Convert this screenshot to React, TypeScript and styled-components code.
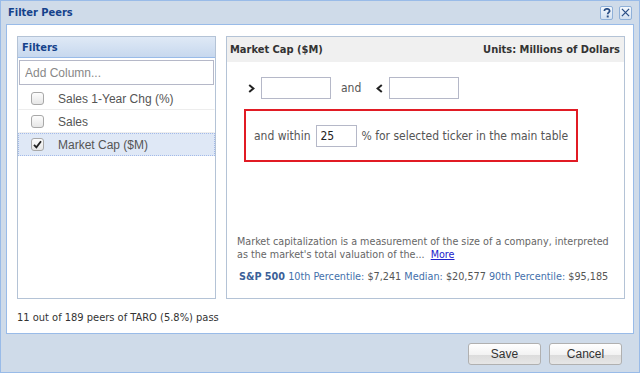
import React from "react";
import styled, { createGlobalStyle } from "styled-components";

const Global = createGlobalStyle`
  html, body { margin: 0; padding: 0; }
  body {
    width: 640px;
    height: 373px;
    overflow: hidden;
    font-family: "DejaVu Sans Condensed", "DejaVu Sans", sans-serif;
  }
`;

const filters = [
  { label: "Sales 1-Year Chg (%)", checked: false },
  { label: "Sales", checked: false },
  { label: "Market Cap ($M)", checked: true },
];

const App: React.FC = () => {
  return (
    <>
      <Global />
      <Window>
        <TitleBar>
          <Title>Filter Peers</Title>
          <Tools>
            <ToolButton>
              <svg width="8" height="10" viewBox="0 0 9 11">
                <path d="M1.5 3.2 C1.5 1.5 3 0.8 4.5 0.8 C6.3 0.8 7.5 1.8 7.5 3.2 C7.5 4.8 5.3 5 5.3 6.8" fill="none" stroke="#2a4e85" strokeWidth="2" />
                <rect x="4.2" y="8.3" width="2.2" height="2.2" fill="#2a4e85" />
              </svg>
            </ToolButton>
            <ToolButton>
              <svg width="9" height="9" viewBox="0 0 10 10">
                <path d="M1 1 L9 9 M9 1 L1 9" stroke="#2a4e85" strokeWidth="1.4" />
              </svg>
            </ToolButton>
          </Tools>
        </TitleBar>
        <Body>
          <Panels>
            <LeftPanel>
              <PanelHeader>Filters</PanelHeader>
              <AddColumn placeholder="Add Column..." />
              <List>
                {filters.map((f) => (
                  <Row key={f.label} $selected={f.checked}>
                    <Check>
                      {f.checked && (
                        <svg width="9" height="9" viewBox="0 0 9 9">
                          <path d="M1 4.8 L3.4 7.4 L8 1.2" fill="none" stroke="#222" strokeWidth="1.8" />
                        </svg>
                      )}
                    </Check>
                    <RowLabel>{f.label}</RowLabel>
                  </Row>
                ))}
              </List>
            </LeftPanel>
            <RightPanel>
              <DetailHeader>
                <span>Market Cap ($M)</span>
                <span>Units: Millions of Dollars</span>
              </DetailHeader>
              <DetailBody>
                <RangeRow>
                  <Chevron>
                    <svg width="7" height="9" viewBox="0 0 7 9">
                      <path d="M1.2 1 L5.4 4.5 L1.2 8" fill="none" stroke="#222" strokeWidth="2" />
                    </svg>
                  </Chevron>
                  <ValueInput />
                  <Word>and</Word>
                  <Chevron>
                    <svg width="7" height="9" viewBox="0 0 7 9">
                      <path d="M5.8 1 L1.6 4.5 L5.8 8" fill="none" stroke="#222" strokeWidth="2" />
                    </svg>
                  </Chevron>
                  <ValueInput />
                </RangeRow>
                <WithinBox>
                  <span>and within</span>
                  <PercentInput defaultValue="25" />
                  <span>% for selected ticker in the main table</span>
                </WithinBox>
                <Spacer />
                <Description>
                  Market capitalization is a measurement of the size of a company, interpreted
                  <br />
                  as the market's total valuation of the...&nbsp; <MoreLink>More</MoreLink>
                </Description>
                <Stats>
                  <Index>S&amp;P 500</Index> <StatLabel>10th Percentile:</StatLabel>{" "}
                  <StatValue>$7,241</StatValue> <StatLabel>Median:</StatLabel>{" "}
                  <StatValue>$20,577</StatValue> <StatLabel>90th Percentile:</StatLabel>{" "}
                  <StatValue>$95,185</StatValue>
                </Stats>
              </DetailBody>
            </RightPanel>
          </Panels>
          <Status>11 out of 189 peers of TARO (5.8%) pass</Status>
        </Body>
        <Footer>
          <Button>Save</Button>
          <Button>Cancel</Button>
        </Footer>
      </Window>
    </>
  );
};

const Window = styled.div`
  box-sizing: border-box;
  width: 640px;
  height: 373px;
  border: 1px solid #99bbe8;
  background: #cfdbe9;
  display: flex;
  flex-direction: column;
  padding: 0 5px 0 5px;
`;

const TitleBar = styled.div`
  height: 23px;
  display: flex;
  align-items: center;
  justify-content: space-between;
  padding: 0 2px 0 2px;
`;

const Title = styled.div`
  font-family: "DejaVu Sans Condensed", "DejaVu Sans", sans-serif;
  font-weight: bold;
  font-size: 11px;
  color: #15428b;
`;

const Tools = styled.div`
  display: flex;
  gap: 6px;
`;

const ToolButton = styled.div`
  box-sizing: border-box;
  width: 13px;
  height: 14px;
  border: 1px solid #8fb0d8;
  border-radius: 2px;
  background: linear-gradient(#f4f8fd, #d3e1f1);
  display: flex;
  align-items: center;
  justify-content: center;
`;

const Body = styled.div`
  box-sizing: border-box;
  height: 310px;
  background: #fff;
  border: 1px solid #99bbe8;
  padding: 11px 8px 0 10px;
  display: flex;
  flex-direction: column;
`;

const Panels = styled.div`
  display: flex;
  gap: 10px;
  height: 263px;
`;

const LeftPanel = styled.div`
  box-sizing: border-box;
  width: 199px;
  flex-shrink: 0;
  border: 1px solid #b4c3d6;
  display: flex;
  flex-direction: column;
`;

const PanelHeader = styled.div`
  height: 20px;
  line-height: 21px;
  padding-left: 4px;
  font-family: "DejaVu Sans Condensed", "DejaVu Sans", sans-serif;
  font-weight: bold;
  font-size: 11px;
  color: #15428b;
  background: linear-gradient(#dfe9f6, #c7d8ee);
  border-bottom: 1px solid #99bbe8;
`;

const AddColumn = styled.input`
  box-sizing: border-box;
  margin: 2px 1px 0 1px;
  height: 25px;
  border: 1px solid #b5b8c8;
  padding: 0 5px;
  font-family: "Liberation Sans", Arial, sans-serif;
  font-size: 12px;
  outline: none;
  &::placeholder {
    color: #888;
  }
`;

const List = styled.div`
  display: flex;
  flex-direction: column;
  margin-top: 2px;
`;

const Row = styled.div<{ $selected: boolean }>`
  box-sizing: border-box;
  height: 23px;
  display: flex;
  align-items: center;
  padding-left: 12px;
  background: ${(p) => (p.$selected ? "#dfe8f6" : "#fff")};
  border: 1px dotted ${(p) => (p.$selected ? "#a3bae9" : "transparent")};
  border-bottom: 1px ${(p) => (p.$selected ? "dotted #a3bae9" : "solid #ededed")};
`;

const Check = styled.div`
  box-sizing: border-box;
  width: 13px;
  height: 13px;
  border: 1px solid #a8a8a8;
  border-radius: 3px;
  background: linear-gradient(#fdfdfd, #e6e6e6);
  display: flex;
  align-items: center;
  justify-content: center;
`;

const RowLabel = styled.span`
  margin-left: 14px;
  font-family: "Liberation Sans", Arial, sans-serif;
  font-size: 12px;
  color: #555;
`;

const RightPanel = styled.div`
  box-sizing: border-box;
  flex: 1;
  min-width: 0;
  border: 1px solid #b4c3d6;
  display: flex;
  flex-direction: column;
`;

const DetailHeader = styled.div`
  height: 25px;
  background: #f0f0f0;
  display: flex;
  align-items: center;
  justify-content: space-between;
  padding: 0 4px 0 3px;
  font-weight: bold;
  font-size: 11px;
  color: #333;
`;

const DetailBody = styled.div`
  flex: 1;
  display: flex;
  flex-direction: column;
  padding: 15px 10px 15px 10px;
  font-size: 12px;
  color: #555;
`;

const RangeRow = styled.div`
  display: flex;
  align-items: center;
  padding-left: 11px;
`;

const Chevron = styled.span`
  display: flex;
  width: 13px;
`;

const ValueInput = styled.input`
  box-sizing: border-box;
  width: 70px;
  height: 22px;
  border: 1px solid #b5b8c8;
  outline: none;
`;

const Word = styled.span`
  margin: 0 15px 0 10px;
`;

const WithinBox = styled.div`
  box-sizing: border-box;
  margin: 10px 0 0 7px;
  width: 334px;
  height: 53px;
  border: 2px solid #e11b24;
  display: flex;
  align-items: center;
  padding-left: 8px;
  gap: 5px;
`;

const PercentInput = styled.input`
  box-sizing: border-box;
  width: 41px;
  height: 22px;
  border: 1px solid #b5b8c8;
  padding: 0 4px;
  font-family: "DejaVu Sans Condensed", "DejaVu Sans", sans-serif;
  font-size: 12px;
  color: #222;
  outline: none;
`;

const Spacer = styled.div`
  flex: 1;
`;

const Description = styled.div`
  line-height: 13px;
  color: #666;
  font-size: 10.7px;
  white-space: nowrap;
`;

const MoreLink = styled.a`
  color: #2222cc;
  text-decoration: underline;
  cursor: pointer;
`;

const Stats = styled.div`
  margin: 9px 0 0 2px;
  font-size: 10.75px;
  white-space: nowrap;
`;

const Index = styled.span`
  font-weight: bold;
  color: #3b5f98;
`;

const StatLabel = styled.span`
  color: #4470ab;
`;

const StatValue = styled.span`
  color: #555;
`;

const Status = styled.div`
  margin-top: 12px;
  font-size: 11px;
  color: #333;
`;

const Footer = styled.div`
  flex: 1;
  display: flex;
  justify-content: flex-end;
  align-items: flex-start;
  gap: 8px;
  padding: 9px 12px 0 0;
`;

const Button = styled.button`
  box-sizing: border-box;
  width: 73px;
  height: 22px;
  border: 1px solid #b0b0b0;
  border-radius: 3px;
  background: linear-gradient(#ffffff 0%, #f2f2f2 55%, #dcdcdc 56%, #e6e6e6 100%);
  font-family: "Liberation Sans", Arial, sans-serif;
  font-size: 12px;
  color: #333;
  padding: 0;
`;

export default App;
